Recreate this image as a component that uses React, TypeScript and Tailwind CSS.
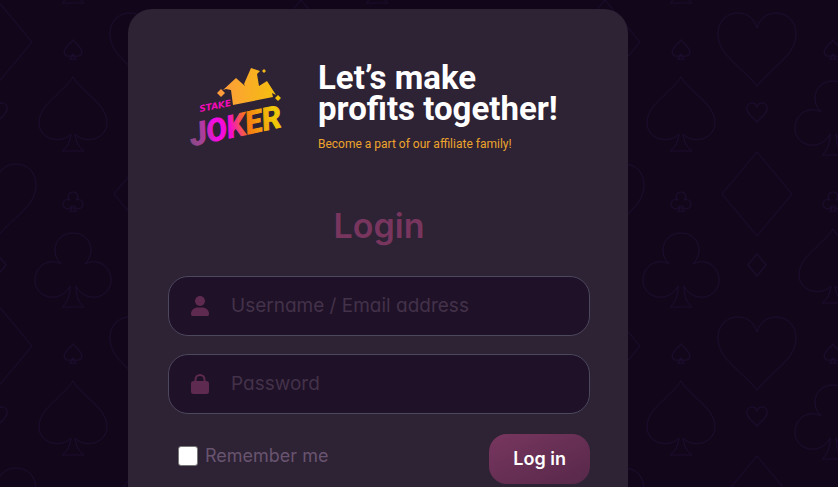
function Spade({ x, y, small = false }: { x: number; y: number; small?: boolean }) {
    return (
        <path
            transform={`translate(${x} ${y}) scale(${small ? 0.26 : 1})`}
            strokeWidth={small ? 4 : 1}
            d="M0 0C9 15 34 27 34 46C34 62 12 68 2 57C3 66 6 70 11 74H-11C-6 70 -3 66 -2 57C-12 68 -34 62 -34 46C-34 27 -9 15 0 0Z"
        />
    );
}

function Club({ x, y, small = false }: { x: number; y: number; small?: boolean }) {
    return (
        <path
            transform={`translate(${x} ${y}) scale(${small ? 0.26 : 1})`}
            strokeWidth={small ? 4 : 1}
            d="M-12 31C-24 19 -17 0 0 0S24 19 12 31C25 24 38 34 38 47C38 66 12 71 3 53C3 64 6 70 11 74H-11C-6 70 -3 64 -3 53C-12 71 -38 66 -38 47C-38 34 -25 24 -12 31Z"
        />
    );
}

function Heart({ x, y, small = false }: { x: number; y: number; small?: boolean }) {
    return (
        <path
            transform={`translate(${x} ${y}) scale(${small ? 0.26 : 1})`}
            strokeWidth={small ? 4 : 1}
            d="M0 15C-3 5 -10 0 -19 0C-31 0 -39 9 -39 21C-39 42 -17 52 0 73C17 52 39 42 39 21C39 9 31 0 19 0C10 0 3 5 0 15Z"
        />
    );
}

function Diamond({ x, y, small = false }: { x: number; y: number; small?: boolean }) {
    return (
        <path
            transform={`translate(${x} ${y}) scale(${small ? 0.26 : 1})`}
            strokeWidth={small ? 4 : 1}
            d="M0 0L35 42L0 84L-35 42Z"
        />
    );
}

function SuitsBackground() {
    return (
        <svg className="absolute inset-0 h-full w-full" aria-hidden="true">
            <defs>
                <pattern id="suits" width="304" height="304" patternUnits="userSpaceOnUse">
                    <g fill="none" stroke="#1b0c2e">
                        <Spade x={73} y={40} small />
                        <Spade x={73} y={77} />
                        <Club x={73} y={192} small />
                        <Club x={73} y={233} />
                        <Club x={73} y={-71} />

                        <Heart x={149} y={13} />
                        <Heart x={149} y={103} small />
                        <Diamond x={149} y={152} />
                        <Diamond x={149} y={254} small />

                        <Spade x={225} y={40} small />
                        <Club x={225} y={81} />
                        <Club x={225} y={192} small />
                        <Spade x={225} y={229} />

                        <Diamond x={-3} y={0} />
                        <Heart x={-3} y={103} small />
                        <Heart x={-3} y={164} />
                        <Diamond x={-3} y={254} small />
                        <Diamond x={301} y={0} />
                        <Heart x={301} y={103} small />
                        <Heart x={301} y={164} />
                        <Diamond x={301} y={254} small />
                    </g>
                </pattern>
            </defs>
            <rect width="100%" height="100%" fill="url(#suits)" />
        </svg>
    );
}

function Logo() {
    return (
        <svg
            width="92"
            height="84"
            viewBox="0 0 92 84"
            className="mt-1 shrink-0 overflow-visible"
            role="img"
            aria-label="Stake Joker"
        >
            <defs>
                <linearGradient id="hat" x1="30" y1="20" x2="88" y2="20" gradientUnits="userSpaceOnUse">
                    <stop offset="0" stopColor="#ff9b3d" />
                    <stop offset="1" stopColor="#f3c00c" />
                </linearGradient>
                <linearGradient id="joker" x1="0" y1="0" x2="86" y2="0" gradientUnits="userSpaceOnUse">
                    <stop offset="0" stopColor="#8a4a86" />
                    <stop offset="0.15" stopColor="#a8409a" />
                    <stop offset="0.3" stopColor="#f40be6" />
                    <stop offset="0.48" stopColor="#f40bd0" />
                    <stop offset="0.68" stopColor="#f77a12" />
                    <stop offset="1" stopColor="#f0c80a" />
                </linearGradient>
            </defs>
            <path
                fill="url(#hat)"
                d="M33 24L46 12L55 20L54 18L61 2L70 5L67 8L69 20L77 15L86 29L82 27L83 31L43 39L41 24L36 23ZM31 23L35 27L31 31L27 27ZM74 3L76 5L74 7L72 5ZM88 29L91 32L88 35L85 32Z"
            />
            <text
                transform="translate(10 46) rotate(-11)"
                fill="#f40bb8"
                className="font-['DejaVu_Sans',sans-serif] text-[9px] font-bold italic"
            >
                STAKE
            </text>
            <text
                transform="translate(2 80) rotate(-12)"
                fill="url(#joker)"
                stroke="url(#joker)"
                strokeWidth="1"
                className="font-[Roboto,sans-serif] text-[31px] font-bold italic"
            >
                JOKER
            </text>
        </svg>
    );
}

function UserIcon() {
    return (
        <svg width="18" height="20" viewBox="0 0 18 20" fill="currentColor" aria-hidden="true">
            <circle cx="9" cy="5" r="5" />
            <path d="M0 18C0 14 3 11.500 7 11.500H11C15 11.500 18 14 18 18C18 19 17.500 20 16.500 20H1.500C.5 20 0 19 0 18Z" />
        </svg>
    );
}

function LockIcon() {
    return (
        <svg width="18" height="20" viewBox="0 0 18 20" fill="currentColor" aria-hidden="true">
            <path
                fillRule="evenodd"
                d="M3.500 7V5.500A5.500 5.500 0 0 1 14.500 5.500V7H15.500A2.500 2.500 0 0 1 18 9.500V17.500A2.500 2.500 0 0 1 15.500 20H2.500A2.500 2.500 0 0 1 0 17.500V9.500A2.500 2.500 0 0 1 2.500 7ZM5.500 7H12.500V5.500A3.500 3.500 0 0 0 5.500 5.500Z"
            />
        </svg>
    );
}

const fieldClass =
    "flex h-[60px] items-center gap-[22px] rounded-[20px] border border-[#4c485e] bg-[#1f1127] pl-[22px] pr-5 text-[#5e2a50]";
const inputClass =
    "min-w-0 flex-1 bg-transparent text-[19px] text-[#b9a9c0] outline-none placeholder:text-[#43324a]";

export default function App() {
    return (
        <div className="relative flex min-h-screen bg-[#12061a] pt-[9px] font-[Inter,sans-serif] [font-feature-settings:'cv11']">
            <SuitsBackground />

            <main className="relative ml-32 w-full max-w-[500px] rounded-t-3xl bg-[#2e2235] pr-[38px] pb-[3px] pl-10">
                <header className="flex gap-9 pt-[53px] pl-[22px] font-[Roboto,sans-serif]">
                    <Logo />
                    <div>
                        <p className="text-[33px] leading-[31px] font-bold whitespace-nowrap text-white">
                            Let’s make
                            <br />
                            profits together!
                        </p>
                        <p className="mt-3 text-xs leading-4 text-[#eda52c]">
                            Become a part of our affiliate family!
                        </p>
                    </div>
                </header>

                <h1 className="mt-[50px] text-center text-[34px] leading-[48px] font-semibold text-[#78365f]">
                    Login
                </h1>

                <form className="mt-[26px]" onSubmit={(e) => e.preventDefault()}>
                    <div className={fieldClass}>
                        <label htmlFor="username" aria-label="Username / Email address">
                            <UserIcon />
                        </label>
                        <input
                            id="username"
                            type="text"
                            placeholder="Username / Email address"
                            className={inputClass}
                        />
                    </div>
                    <div className={`mt-[18px] ${fieldClass}`}>
                        <label htmlFor="password" aria-label="Password">
                            <LockIcon />
                        </label>
                        <input id="password" type="password" placeholder="Password" className={inputClass} />
                    </div>

                    <div className="mt-5 flex items-start justify-between">
                        <div className="flex items-center gap-[7px] pt-2 pl-[10px]">
                            <input
                                id="remember"
                                type="checkbox"
                                className="h-5 w-5 appearance-none rounded-[3px] border border-[#767676] bg-white checked:bg-[#78365f]"
                            />
                            <label htmlFor="remember" className="text-lg text-[#68546f]">
                                Remember me
                            </label>
                        </div>
                        <button
                            type="submit"
                            className="h-[50px] rounded-[18px] bg-gradient-to-br from-[#78365f] to-[#57284a] px-6 text-lg font-semibold text-white"
                        >
                            Log in
                        </button>
                    </div>
                </form>
            </main>
        </div>
    );
}
